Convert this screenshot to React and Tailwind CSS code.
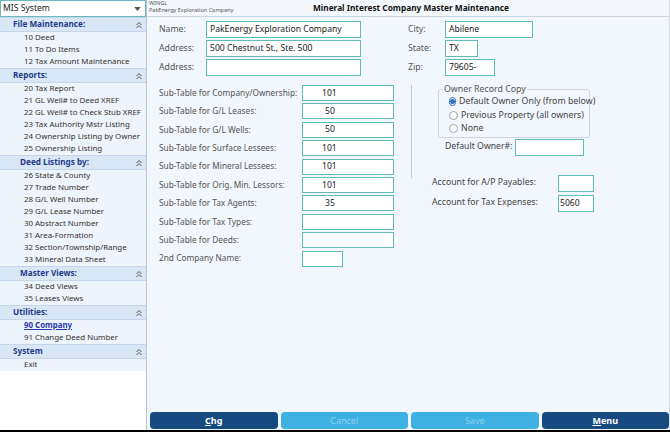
import React from "react";

const font = { fontFamily: '"Noto Sans", "Open Sans", sans-serif' };

function Chevrons() {
  return (
    <svg width="8" height="8" viewBox="0 0 8 8" className="text-[#555]">
      <path d="M1.5 4 L4 1.5 L6.5 4" fill="none" stroke="currentColor" strokeWidth="1" />
      <path d="M1.5 7 L4 4.5 L6.5 7" fill="none" stroke="currentColor" strokeWidth="1" />
    </svg>
  );
}

function Section({ title, indent, items }) {
  return (
    <div>
      <div className={`flex h-[15px] items-center justify-between border-y border-[#c5d6ea] bg-[#d9e6f5] pr-[3px] ${indent}`}>
        <span className="whitespace-nowrap text-[8.2px] font-bold text-[#1f3c88]">{title}</span>
        <Chevrons />
      </div>
      <div className="bg-[#eef4fb]">
        {items.map((it) => (
          <div key={it.t} className="flex h-[12px] items-center pl-[24px]">
            {it.active ? (
              <span className="whitespace-nowrap text-[7.9px] font-bold text-[#2a3bb0] underline">{it.t}</span>
            ) : (
              <span className="whitespace-nowrap text-[7.9px] text-[#333]">{it.t}</span>
            )}
          </div>
        ))}
      </div>
    </div>
  );
}

function Input({ w, value, pl = "pl-[3px]", h = "h-[17px]" }) {
  return (
    <div className={`flex ${h} ${w} shrink-0 items-center whitespace-nowrap border-[1.5px] border-[#5fbcb6] bg-white ${pl} text-[8.6px] text-[#222]`}>
      {value}
    </div>
  );
}

function Radio({ checked, label }) {
  return (
    <div className="flex h-[13.5px] items-center gap-[3px]">
      <span className={`flex h-[9px] w-[9px] items-center justify-center rounded-full border ${checked ? "border-[#2f6fc0]" : "border-[#9aa]"} bg-white`}>
        {checked && <span className="h-[5px] w-[5px] rounded-full bg-[#2f6fc0]" />}
      </span>
      <span className="whitespace-nowrap text-[8.8px] text-[#444]">{label}</span>
    </div>
  );
}

export default function App() {
  const subs = [
    ["Sub-Table for Company/Ownership:", "101", "pl-[19px]", "w-[92px]"],
    ["Sub-Table for G/L Leases:", "50", "pl-[22px]", "w-[92px]"],
    ["Sub-Table for G/L Wells:", "50", "pl-[22px]", "w-[92px]"],
    ["Sub-Table for Surface Lessees:", "101", "pl-[19px]", "w-[92px]"],
    ["Sub-Table for Mineral Lessees:", "101", "pl-[19px]", "w-[92px]"],
    ["Sub-Table for Orig. Min. Lessors:", "101", "pl-[19px]", "w-[92px]"],
    ["Sub-Table for Tax Agents:", "35", "pl-[22px]", "w-[92px]"],
    ["Sub-Table for Tax Types:", "", "pl-[19px]", "w-[92px]"],
    ["Sub-Table for Deeds:", "", "pl-[19px]", "w-[92px]"],
    ["2nd Company Name:", "", "pl-[19px]", "w-[41px]"],
  ];
  return (
    <div style={font} className="flex h-[432px] w-[670px] flex-col overflow-hidden bg-white">
      <div className="flex min-h-0 flex-1">
        {/* Sidebar */}
        <div className="flex w-[147px] shrink-0 flex-col border-r border-[#b8c4d0] bg-white">
          <div className="flex h-[17px] items-center justify-between border border-[#6bb8c0] bg-white pl-[2px] pr-[4px]">
            <span className="text-[8.6px] text-[#222]">MIS System</span>
            <svg width="7" height="4" viewBox="0 0 8 5"><path d="M0 0 L8 0 L4 5 Z" fill="#555" /></svg>
          </div>
          <Section title="File Maintenance:" indent="pl-[13px]" items={[{ t: "10 Deed" }, { t: "11 To Do Items" }, { t: "12 Tax Amount Maintenance" }]} />
          <Section title="Reports:" indent="pl-[13px]" items={[{ t: "20 Tax Report" }, { t: "21 GL Well# to Deed XREF" }, { t: "22 GL Well# to Check Stub XREF" }, { t: "23 Tax Authority Mstr Listing" }, { t: "24 Ownership Listing by Owner" }, { t: "25 Ownership Listing" }]} />
          <Section title="Deed Listings by:" indent="pl-[20px]" items={[{ t: "26 State & County" }, { t: "27 Trade Number" }, { t: "28 G/L Well Number" }, { t: "29 G/L Lease Number" }, { t: "30 Abstract Number" }, { t: "31 Area-Formation" }, { t: "32 Section/Township/Range" }, { t: "33 Mineral Data Sheet" }]} />
          <Section title="Master Views:" indent="pl-[20px]" items={[{ t: "34 Deed Views" }, { t: "35 Leases Views" }]} />
          <Section title="Utilities:" indent="pl-[13px]" items={[{ t: "90 Company", active: true }, { t: "91 Change Deed Number" }]} />
          <Section title="System" indent="pl-[13px]" items={[{ t: "Exit" }]} />
        </div>

        {/* Main */}
        <div className="flex min-w-0 flex-1 flex-col border-r border-[#d0dae4] bg-[#f1f7fd]">
          <div className="relative flex h-[17px] shrink-0 items-center justify-center border-b border-[#c8d4e0] bg-[#f4f8fc]">
            <div className="absolute left-[2px] top-[0px] flex flex-col leading-[7px]">
              <span className="text-[5.5px] text-[#555]">WINGL</span>
              <span className="text-[5.5px] text-[#555]">PakEnergy Exploration Company</span>
            </div>
            <span className="ml-[6px] whitespace-nowrap text-[8.3px] font-bold text-[#111]">Mineral Interest Company Master Maintenance</span>
          </div>

          {/* Top section */}
          <div className="flex pl-[12px] pt-[4px]">
            <div className="flex w-[249px] flex-col gap-[2px]">
              {[["Name:", "PakEnergy Exploration Company"], ["Address:", "500 Chestnut St., Ste. 500"], ["Address:", ""]].map(([l, v], i) => (
                <div key={i} className="flex items-center">
                  <span className="w-[47px] whitespace-nowrap text-[8.7px] text-[#555]">{l}</span>
                  <Input w="w-[155px]" value={v} />
                </div>
              ))}
            </div>
            <div className="flex flex-col gap-[2px]">
              {[["City:", "Abilene", "w-[88px]"], ["State:", "TX", "w-[33px]"], ["Zip:", "79605-", "w-[50px]"]].map(([l, v, w], i) => (
                <div key={i} className="flex items-center">
                  <span className="w-[37px] whitespace-nowrap text-[8.7px] text-[#555]">{l}</span>
                  <Input w={w} value={v} />
                </div>
              ))}
            </div>
          </div>

          {/* Lower section */}
          <div className="flex pl-[12px] pt-[9px]">
            <div className="flex w-[252px] shrink-0 flex-col gap-[2.4px]">
              {subs.map(([l, v, pl, w], i) => (
                <div key={i} className="flex items-center">
                  <span className="w-[143px] whitespace-nowrap text-[8.3px] text-[#555]">{l}</span>
                  <Input w={w} value={v} pl={pl} h="h-[16px]" />
                </div>
              ))}
            </div>
            <div className="h-[93px] w-0 border-l border-[#c0ccd8]" />
            <div className="flex flex-col">
              <div className="relative ml-[26px] mt-[4px] w-[152px] rounded-[3px] border border-[#cdd6e0] pb-[1px] pl-[10px] pt-[5px]">
                <span className="absolute left-[4px] top-[-7px] whitespace-nowrap bg-[#f1f7fd] px-[1px] text-[8.8px] leading-[12px] text-[#555]">Owner Record Copy</span>
                <Radio checked label="Default Owner Only (from below)" />
                <Radio label="Previous Property (all owners)" />
                <Radio label="None" />
              </div>
              <div className="ml-[33px] mt-[1px] flex items-center">
                <span className="w-[70px] whitespace-nowrap text-[8.7px] text-[#444]">Default Owner#:</span>
                <Input w="w-[69px]" value="" />
              </div>
              <div className="ml-[20px] mt-[19px] flex flex-col gap-[3px]">
                {[["Account for A/P Payables:", ""], ["Account for Tax Expenses:", "5060"]].map(([l, v], i) => (
                  <div key={i} className="flex items-center">
                    <span className="w-[126px] whitespace-nowrap text-[8.7px] text-[#444]">{l}</span>
                    <Input w="w-[36px]" value={v} pl="pl-[1px]" />
                  </div>
                ))}
              </div>
            </div>
          </div>

          <div className="flex-1" />
          {/* Buttons */}
          <div className="flex gap-[3px] pb-[1px] pl-[3px]">
            <div className="flex h-[17px] w-[128px] items-center justify-center rounded-[4px] bg-[#164a80] text-[9px] font-bold text-white"><span><span className="underline">C</span>hg</span></div>
            <div className="flex h-[17px] w-[128px] items-center justify-center rounded-[4px] bg-[#3fb0e2] text-[9px] text-[#8fd0ef]"><span>Cancel</span></div>
            <div className="flex h-[17px] w-[128px] items-center justify-center rounded-[4px] bg-[#3fb0e2] text-[9px] text-[#8fd0ef]"><span>Save</span></div>
            <div className="flex h-[17px] w-[128px] items-center justify-center rounded-[4px] bg-[#164a80] text-[9px] font-bold text-white"><span><span className="underline">M</span>enu</span></div>
          </div>
        </div>
      </div>
      <div className="h-[2px] bg-black" />
    </div>
  );
}
